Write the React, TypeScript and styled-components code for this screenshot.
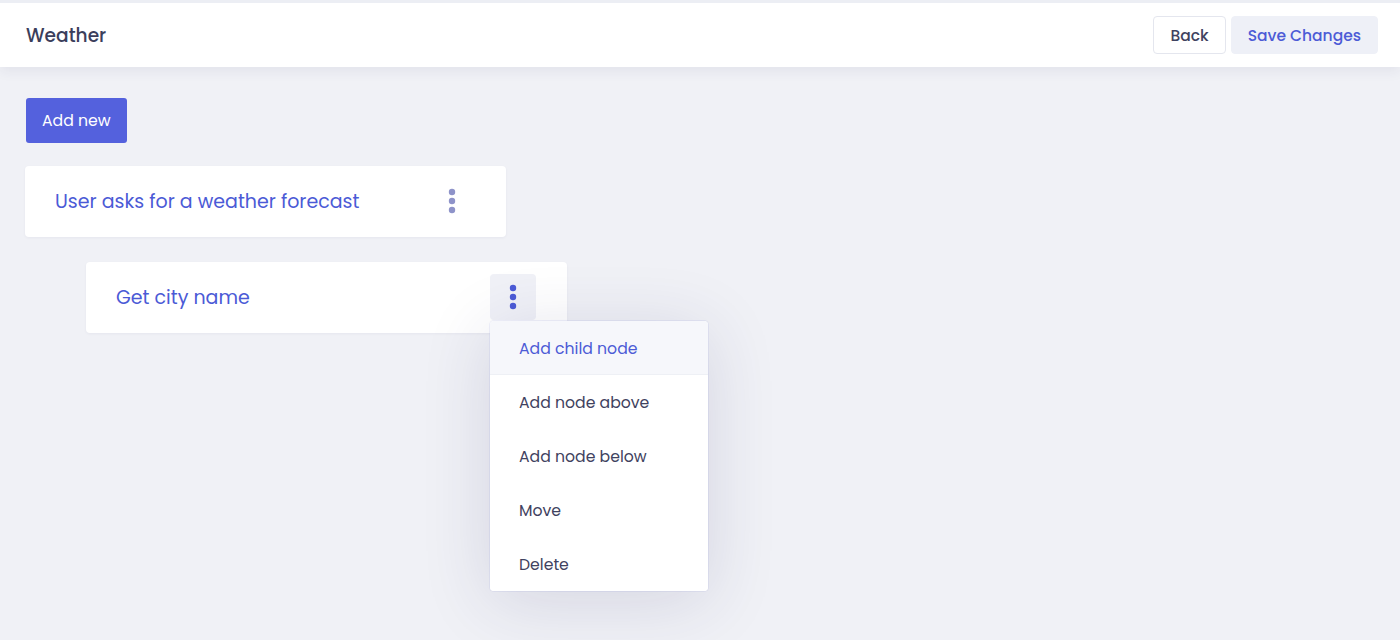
import React from "react";
import styled, { createGlobalStyle } from "styled-components";

const Global = createGlobalStyle`
  html, body { margin: 0; padding: 0; background: #f0f1f6; }
  body { font-family: "Poppins", "Inter", "Noto Sans", sans-serif; }
  * { box-sizing: border-box; }
`;

const Page = styled.div`
  width: 1400px;
  height: 640px;
  background: #f0f1f6;
  border-top: 3px solid #eceef4;
  overflow: hidden;
`;

const Header = styled.header`
  height: 64px;
  background: #fff;
  display: flex;
  align-items: center;
  justify-content: space-between;
  padding: 0 22px 0 26px;
  box-shadow: 0 4px 12px rgba(40, 45, 90, 0.07);
  position: relative;
  z-index: 1;
`;

const Title = styled.h1`
  margin: 0;
  font-size: 18.6px;
  font-weight: 500;
  color: #3b3e5b;
`;

const Actions = styled.div`
  display: flex;
  gap: 5px;
`;

const HeaderButton = styled.button<{ $primary?: boolean }>`
  height: 38px;
  padding: 0 16px;
  border-radius: 4px;
  font-family: inherit;
  font-size: 15.5px;
  font-weight: 500;
  cursor: pointer;
  border: 1px solid ${(p) => (p.$primary ? "#eef0f7" : "#e4e6ee")};
  background: ${(p) => (p.$primary ? "#eef0f7" : "#fff")};
  color: ${(p) => (p.$primary ? "#4c5bd6" : "#3f4260")};
`;

const Content = styled.main`
  padding: 31px 25px;
  display: flex;
  flex-direction: column;
  align-items: flex-start;
`;

const AddButton = styled.button`
  height: 45px;
  padding: 0 16px;
  border: none;
  border-radius: 3px;
  background: #5461dd;
  color: #fff;
  font-family: inherit;
  font-size: 15.7px;
  cursor: pointer;
  margin-left: 1px;
`;

const Tree = styled.div`
  margin-top: 23px;
  display: flex;
  flex-direction: column;
  gap: 25px;
`;

const Card = styled.div<{ $depth: number }>`
  position: relative;
  width: 481px;
  height: 71px;
  margin-left: ${(p) => p.$depth * 61}px;
  background: #fff;
  border-radius: 4px;
  box-shadow: 0 1px 3px rgba(40, 45, 90, 0.05);
  display: flex;
  align-items: center;
  justify-content: space-between;
  padding: 0 31px 0 30px;
`;

const CardTitle = styled.span`
  font-size: 19px;
  color: #4b5ad6;
`;

const Kebab = styled.button<{ $active?: boolean }>`
  width: 46px;
  height: 46px;
  margin-bottom: 1px;
  border: none;
  border-radius: 4px;
  background: ${(p) => (p.$active ? "#f0f1f7" : "transparent")};
  display: flex;
  align-items: center;
  justify-content: center;
  cursor: pointer;
  color: ${(p) => (p.$active ? "#4c5bd6" : "#8e93c9")};
`;

const Menu = styled.ul`
  position: absolute;
  left: 404px;
  top: 59px;
  width: 218px;
  margin: 0;
  padding: 0;
  list-style: none;
  background: #fff;
  border-radius: 4px;
  box-shadow: 0 10px 70px rgba(40, 45, 100, 0.14), 0 0 0 1px rgba(120, 130, 220, 0.1);
  overflow: hidden;
  z-index: 5;
`;

const MenuItem = styled.li<{ $active?: boolean }>`
  height: 54px;
  display: flex;
  align-items: center;
  padding-left: 29px;
  padding-top: 1px;
  font-size: 15.7px;
  color: ${(p) => (p.$active ? "#4c5bd6" : "#3f4260")};
  background: ${(p) => (p.$active ? "#f6f7fb" : "#fff")};
  border-bottom: ${(p) => (p.$active ? "1px solid #eef0f5" : "none")};
`;

const Dots = () => (
  <svg width="8" height="26" viewBox="0 0 8 26" fill="currentColor">
    <circle cx="4" cy="4" r="3.2" />
    <circle cx="4" cy="13" r="3.2" />
    <circle cx="4" cy="22" r="3.2" />
  </svg>
);

const items = ["Add child node", "Add node above", "Add node below", "Move", "Delete"];

export default function App() {
  return (
    <>
      <Global />
      <Page>
        <Header>
          <Title>Weather</Title>
          <Actions>
            <HeaderButton>Back</HeaderButton>
            <HeaderButton $primary>Save Changes</HeaderButton>
          </Actions>
        </Header>
        <Content>
          <AddButton>Add new</AddButton>
          <Tree>
            <Card $depth={0}>
              <CardTitle>User asks for a weather forecast</CardTitle>
              <Kebab>
                <Dots />
              </Kebab>
            </Card>
            <Card $depth={1}>
              <CardTitle>Get city name</CardTitle>
              <Kebab $active>
                <Dots />
              </Kebab>
              <Menu>
                {items.map((t, i) => (
                  <MenuItem key={t} $active={i === 0}>
                    {t}
                  </MenuItem>
                ))}
              </Menu>
            </Card>
          </Tree>
        </Content>
      </Page>
    </>
  );
}
